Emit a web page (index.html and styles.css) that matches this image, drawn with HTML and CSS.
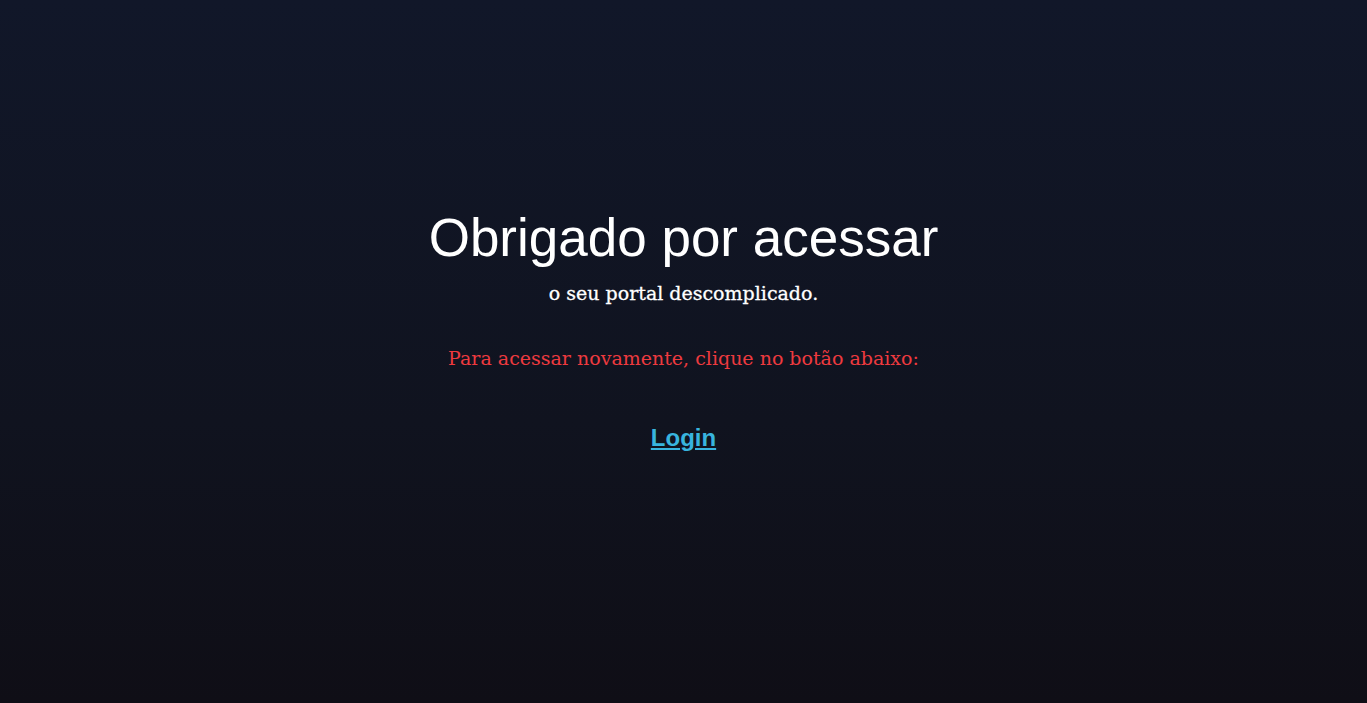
FILE: index.html
```html
<!DOCTYPE html>
<html lang="pt-BR">
<head>
<meta charset="utf-8">
<title>Obrigado</title>
<link rel="stylesheet" href="styles.css">
</head>
<body>
<main class="page">
  <section class="content">
    <h1 class="title">Obrigado por acessar</h1>
    <p class="subtitle">o seu portal descomplicado.</p>
    <p class="notice">Para acessar novamente, clique no botão abaixo:</p>
    <a class="login" href="#">Login</a>
  </section>
</main>
</body>
</html>
```
FILE: styles.css
```css
html, body {
  margin: 0;
  padding: 0;
  height: 100%;
}
body {
  background: linear-gradient(180deg, #111729 0%, #10131f 60%, #0f0e16 100%);
  color: #fff;
}
.page {
  min-height: 703px;
  display: flex;
  justify-content: center;
}
.content {
  display: flex;
  flex-direction: column;
  align-items: center;
  padding-top: 208px;
}
.title {
  margin: 0;
  font-family: "Liberation Sans", Arial, sans-serif;
  font-weight: 400;
  font-size: 53px;
  line-height: 60px;
  color: #fff;
}
.subtitle {
  margin: 13px 0 0;
  font-family: "DejaVu Serif", serif;
  font-weight: 400;
  font-size: 19px;
  line-height: 24px;
  color: #fff;
  -webkit-text-stroke: 0.3px #fff;
}
.notice {
  margin: 41px 0 0;
  font-family: "DejaVu Serif", serif;
  font-size: 19px;
  line-height: 24px;
  color: #ee3a3f;
}
.login {
  margin-top: 53px;
  font-family: "Liberation Sans", Arial, sans-serif;
  font-weight: 700;
  font-size: 24px;
  line-height: 30px;
  color: #38b4de;
  text-decoration: underline;
}
```
